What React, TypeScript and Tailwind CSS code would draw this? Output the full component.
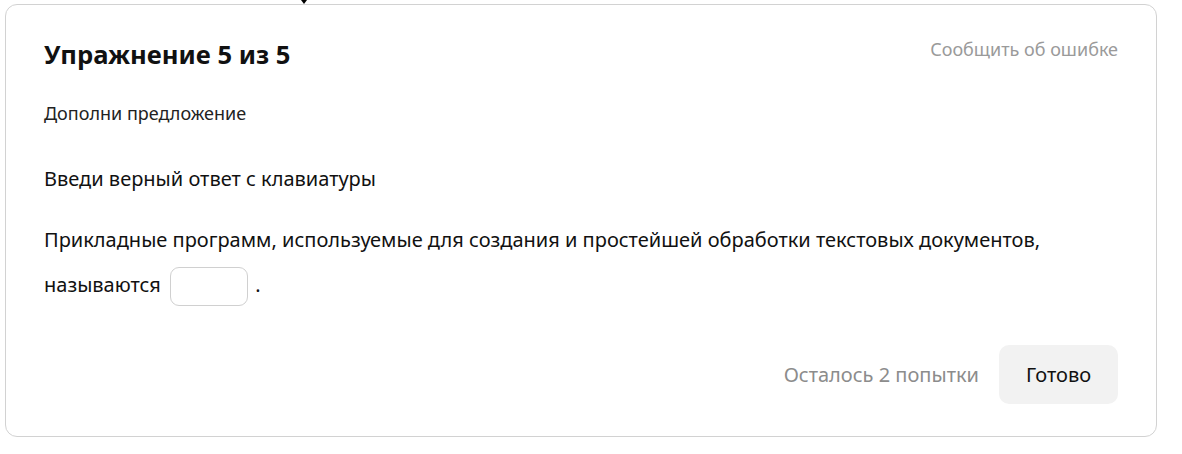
import React from "react";

export default function App() {
  return (
    <div className="w-[1182px] h-[454px] bg-white relative" style={{ fontFamily: '"Noto Sans", "Open Sans", sans-serif' }}>
      <div className="absolute left-[301px] top-0 w-0 h-0 border-l-[3px] border-r-[3px] border-t-[4px] border-l-transparent border-r-transparent border-t-black" />
      <div className="pl-[5px] pt-[4px]">
        <div className="w-[1152px] h-[433px] border border-[#d2d2d2] rounded-[12px] px-[38px] pt-[30px] flex flex-col">
          <div className="flex justify-between items-start">
            <h1 className="text-[25.6px] leading-[40px] font-bold text-[#111]">Упражнение 5 из 5</h1>
            <a className="text-[18px] leading-[24px] text-[#9a9a9a] mt-[2px]">Сообщить об ошибке</a>
          </div>
          <div className="mt-[26px] text-[18px] leading-[24px] text-[#222]">Дополни предложение</div>
          <div className="mt-[42px] text-[20px] leading-[24px] text-[#111]">Введи верный ответ с клавиатуры</div>
          <div className="mt-[27px] text-[20px] leading-[44px] text-[#111]">
            Прикладные программ, используемые для создания и простейшей обработки текстовых документов,
            <br />
            <span className="inline-block mt-[1px]">называются</span>{" "}
            <span className="inline-block align-middle w-[78px] h-[39px] border border-[#d0d0d0] rounded-[9px] ml-[4px] mr-[2px]" /> .
          </div>
          <div className="mt-auto mb-[32px] flex justify-end items-center gap-[20px]">
            <span className="text-[20px] text-[#8c8c8c]">Осталось 2 попытки</span>
            <button className="w-[119px] h-[59px] rounded-[10px] bg-[#f2f2f2] text-[20px] text-[#111]">Готово</button>
          </div>
        </div>
      </div>
    </div>
  );
}
